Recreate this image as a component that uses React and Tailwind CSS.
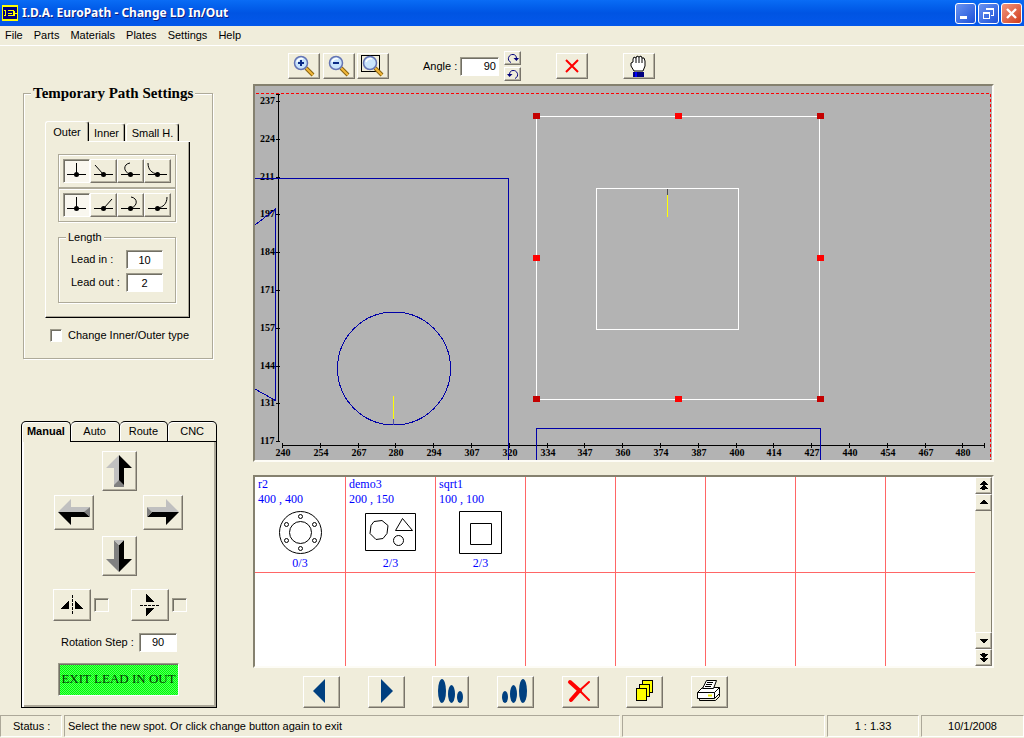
import React, { useState } from 'react';

const raised = 'border border-t-white border-l-white border-r-[#78746a] border-b-[#78746a] shadow-[inset_-1px_-1px_0_#b4b0a0] bg-[#f0eddb]';
const sunken = 'border border-t-[#9d9a8b] border-l-[#9d9a8b] border-r-white border-b-white shadow-[inset_1px_1px_0_#716f64]';
const well = 'border-2 border-t-[#85816f] border-l-[#85816f] border-r-[#fdfcf6] border-b-[#fdfcf6]';
const etched = 'border border-[#aeaa99] shadow-[inset_1px_1px_0_#fff,1px_1px_0_#fff]';

const menu = ['File', 'Parts', 'Materials', 'Plates', 'Settings', 'Help'];

const xLabels = [240, 254, 267, 280, 294, 307, 320, 334, 347, 360, 374, 387, 400, 414, 427, 440, 454, 467, 480];
const yLabels = [237, 224, 211, 197, 184, 171, 157, 144, 131, 117];

const handles = [
  [536, 116], [678, 116], [820, 116],
  [536, 258], [820, 258],
  [536, 399], [678, 399], [820, 399],
];

function TitleBar() {
  const box = 'w-[21px] h-[21px] rounded-[3px] border border-white flex items-center justify-center';
  return (
    <header className="h-[26px] flex items-center pl-[2px] pr-[2px] bg-linear-to-b from-[#0a6cf5] via-[#0054e3] to-[#0458ea]">
      <svg width="16" height="16" viewBox="0 0 16 16" shapeRendering="crispEdges">
        <rect width="16" height="16" fill="#ffff00" />
        <rect x="1" y="2" width="14" height="12" fill="#00007b" />
        <path d="M2 5h2M3 5v6M2 10.500h2M6 5.500h5v5h-5M6 8h4M12 8h3M12 6v5" stroke="#ffff00" fill="none" />
      </svg>
      <h1 className="ml-[4px] flex-1 text-[12px] font-bold text-white font-['Noto_Sans',sans-serif] [text-shadow:1px_1px_0_#0f1f80]">
        I.D.A. EuroPath - Change LD In/Out
      </h1>
      <div className="flex gap-[2px]">
        <button aria-label="Minimize" className={`${box} bg-linear-to-br from-[#6b93f0] to-[#1c4fd8]`}>
          <svg width="19" height="19"><rect x="4" y="12" width="7" height="3" fill="#fff" /></svg>
        </button>
        <button aria-label="Restore" className={`${box} bg-linear-to-br from-[#6b93f0] to-[#1c4fd8]`}>
          <svg width="19" height="19" fill="none" stroke="#fff" shapeRendering="crispEdges">
            <path d="M7 5h7v6h-2M4.500 9v5.500h6v-6h-6" />
            <path d="M7 4.500h8M4 8.500h7" strokeWidth="2" />
          </svg>
        </button>
        <button aria-label="Close" className={`${box} bg-linear-to-br from-[#f0947c] to-[#d03a14]`}>
          <svg width="19" height="19"><path d="M5 5l9 9M14 5l-9 9" stroke="#fff" strokeWidth="2.400" /></svg>
        </button>
      </div>
    </header>
  );
}

const leadShapes = {
  up: 'M13.500 4v11',
  diagLeft: 'M5 6l8 9',
  arcLeft: 'M13 4c-7 1-7 9 0 11',
  curveLeft: 'M4 4c0 7 4 10 9 11',
  diagRight: 'M22 6l-8 9',
  arcRight: 'M14 4c7 1 7 9 0 11',
  curveRight: 'M23 4c0 7-4 10-9 11',
};

function LeadButton({ shape, active, onClick }) {
  return (
    <button
      aria-label={shape}
      aria-pressed={active}
      onClick={onClick}
      className={`w-[27px] h-6 ${active ? `${sunken} bg-[#f9f7ef]` : raised}`}
    >
      <svg width="25" height="22" viewBox="1 1 25 22" fill="none" stroke="#000">
        <path d={leadShapes[shape]} />
        <path d="M4 15.500h19" shapeRendering="crispEdges" />
        <circle cx="13.500" cy="15.500" r="2.500" fill="#000" stroke="none" />
      </svg>
    </button>
  );
}

function LeadGroup({ shapes }) {
  const [selected, setSelected] = useState('up');
  return (
    <div className={`flex p-1 ${etched}`}>
      {shapes.map(s => (
        <LeadButton key={s} shape={s} active={s === selected} onClick={() => setSelected(s)} />
      ))}
    </div>
  );
}

function PathSettings() {
  const tab = 'pt-px border-t border-t-white border-r border-r-black shadow-[inset_-1px_0_0_#aca899] whitespace-nowrap';
  return (
    <fieldset className={`ml-[23px] mr-[40px] pt-[18px] pl-[21px] pr-[22px] pb-[14px] min-w-0 ${etched}`}>
      <legend className="-ml-[14px] px-[2px] h-5 leading-5 bg-[#f0eddb] font-['Liberation_Serif',serif] font-bold text-[15px] whitespace-nowrap">
        Temporary Path Settings
      </legend>
      <div role="tablist" className="flex items-end h-5">
        <button role="tab" aria-selected="true" className={`w-[44px] h-5 border-l border-l-white rounded-t-[3px] ${tab}`}>Outer</button>
        <button role="tab" className={`w-[36px] h-[18px] rounded-tr-[3px] ${tab}`}>Inner</button>
        <button role="tab" className={`ml-px w-[53px] h-[18px] border-l border-l-white rounded-t-[3px] ${tab}`}>Small H.</button>
      </div>
      <div className="flex">
        <div className="w-[44px] h-px border-l border-white"></div>
        <div className="flex-1 h-px bg-white"></div>
      </div>
      <div className="border-l border-l-white border-r border-r-black border-b border-b-black shadow-[inset_-1px_-1px_0_#aca899] pl-3 pr-[13px] pt-3 pb-[14px]">
        <LeadGroup shapes={['up', 'diagLeft', 'arcLeft', 'curveLeft']} />
        <LeadGroup shapes={['up', 'diagRight', 'arcRight', 'curveRight']} />
        <fieldset className={`mt-[7px] px-3 pt-[5px] pb-[10px] min-w-0 ${etched}`}>
          <legend className="-ml-[5px] px-[2px] h-4 leading-4 bg-[#f0eddb]">Length</legend>
          <div className="flex items-center justify-between h-[19px]">
            <label htmlFor="leadIn">Lead in :</label>
            <input id="leadIn" defaultValue="10" className={`w-[37px] h-[19px] text-center bg-white ${sunken}`} />
          </div>
          <div className="flex items-center justify-between h-[19px] mt-1">
            <label htmlFor="leadOut">Lead out :</label>
            <input id="leadOut" defaultValue="2" className={`w-[37px] h-[19px] text-center bg-white ${sunken}`} />
          </div>
        </fieldset>
      </div>
      <label className="flex items-center gap-[6px] mt-[9px] ml-[5px] whitespace-nowrap">
        <input type="checkbox" className={`appearance-none w-[12px] h-[13px] bg-white ${sunken}`} />
        Change Inner/Outer type
      </label>
    </fieldset>
  );
}

function BevelArrow({ dir }) {
  if (dir === 'up') {
    return (
      <svg width="26" height="34" viewBox="0 0 26 34">
        <path d="M13 1L0 14h8v19l5-5z" fill="#c0c0c0" />
        <path d="M13 1l13 13h-8v19l-5-5z" fill="#000" />
        <path d="M8 33v-2l5-5 5 5v2z" fill="#808080" />
      </svg>
    );
  }
  if (dir === 'down') {
    return (
      <svg width="26" height="34" viewBox="0 0 26 34">
        <path d="M13 33L0 20h8V1l5 5z" fill="#808080" />
        <path d="M13 33l13-13h-8V1l-5 5z" fill="#000" />
        <path d="M8 1h10l-5 5z" fill="#c0c0c0" />
      </svg>
    );
  }
  if (dir === 'left') {
    return (
      <svg width="34" height="26" viewBox="0 0 34 26">
        <path d="M1 13L14 0v8h19l-5 5z" fill="#c0c0c0" />
        <path d="M1 13l13 13v-8h19l-5-5z" fill="#000" />
        <path d="M33 8v10l-6-5z" fill="#808080" />
      </svg>
    );
  }
  return (
    <svg width="34" height="26" viewBox="0 0 34 26">
      <path d="M33 13L20 0v8H1l5 5z" fill="#c0c0c0" />
      <path d="M33 13L20 26v-8H1l5-5z" fill="#000" />
      <path d="M1 8v10l5-5z" fill="#808080" />
    </svg>
  );
}

function ArrowButton({ dir }) {
  const size = dir === 'up' || dir === 'down' ? 'w-[35px] h-10' : 'w-10 h-[35px]';
  return (
    <button aria-label={`Move ${dir}`} className={`flex items-center justify-center ${size} ${raised}`}>
      <BevelArrow dir={dir} />
    </button>
  );
}

function MovePanel() {
  const tab = 'flex-1 h-[21px] border-t border-r border-black rounded-t-[5px] shadow-[inset_1px_1px_0_#fff]';
  return (
    <section className="ml-[21px] mr-[36px] mt-[62px]">
      <div role="tablist" className="flex">
        <button role="tab" aria-selected="true" className={`${tab} border-l font-bold`}>Manual</button>
        <button role="tab" className={`${tab} border-b`}>Auto</button>
        <button role="tab" className={`${tab} border-b`}>Route</button>
        <button role="tab" className={`${tab} border-b`}>CNC</button>
      </div>
      <div className="flex flex-col border-l border-r border-b border-black shadow-[inset_2px_0_0_#fff,inset_-2px_-2px_0_#aca899] pt-[9px] pb-[11px]">
        <div className="flex justify-center"><ArrowButton dir="up" /></div>
        <div className="flex justify-between pl-8 pr-[33px] mt-1">
          <ArrowButton dir="left" />
          <ArrowButton dir="right" />
        </div>
        <div className="flex justify-center mt-[6px]"><ArrowButton dir="down" /></div>

        <div className="flex items-center mt-[13px] ml-[31px]">
          <button aria-label="Mirror horizontally" className={`w-[38px] h-8 flex items-center justify-center ${raised}`}>
            <svg width="24" height="20" shapeRendering="crispEdges">
              <path d="M0 14h9V6zM24 14h-9V6z" />
              <path d="M12.500 0v20" stroke="#000" strokeDasharray="3 1" />
            </svg>
          </button>
          <input type="checkbox" aria-label="Mirror horizontally" className={`appearance-none ml-[3px] w-[15px] h-[14px] ${sunken}`} />
          <button aria-label="Mirror vertically" className={`ml-[22px] w-[38px] h-8 flex items-center justify-center ${raised}`}>
            <svg width="20" height="24" shapeRendering="crispEdges">
              <path d="M6 0v9h8zM6 24v-9h8z" />
              <path d="M0 12.500h20" stroke="#000" strokeDasharray="3 1" />
            </svg>
          </button>
          <input type="checkbox" aria-label="Mirror vertically" className={`appearance-none ml-[3px] w-[15px] h-[14px] ${sunken}`} />
        </div>

        <div className="flex items-center justify-between mt-3 pl-[39px] pr-[39px]">
          <label htmlFor="rotationStep">Rotation Step :</label>
          <input id="rotationStep" defaultValue="90" className={`w-[38px] h-[19px] text-center bg-white ${sunken}`} />
        </div>

        <button className={`mt-[11px] ml-9 mr-[37px] h-[33px] whitespace-nowrap font-['Liberation_Serif',serif] text-[13px] text-[#003c00] bg-[repeating-conic-gradient(#00ff00_0%_25%,#50ff60_0%_50%)] bg-size-[2px_2px] ${sunken}`}>
          EXIT LEAD IN OUT
        </button>
      </div>
    </section>
  );
}

function Magnifier({ sign, framed }) {
  return (
    <svg width="24" height="24" viewBox="0 0 24 24" fill="none">
      {framed && <rect x="0.500" y="1.500" width="18" height="16" stroke="#000" shapeRendering="crispEdges" />}
      <path d="M14 14l7 7" stroke="#8a6410" strokeWidth="4" />
      <path d="M14 14l7 7" stroke="#f2b83a" strokeWidth="2" />
      <circle cx="9" cy="9" r="6.500" fill="#c9e4fb" stroke="#6474b4" strokeWidth="1.500" />
      <path d="M5 8c1-3 4-4 6-3" stroke="#fff" strokeWidth="1.500" />
      {sign && <path d="M6 9h6" stroke="#0a2a86" strokeWidth="2" />}
      {sign === 'plus' && <path d="M9 6v6" stroke="#0a2a86" strokeWidth="2" />}
    </svg>
  );
}

function ViewToolbar() {
  const btn = `w-8 h-[26px] flex items-center justify-center ${raised}`;
  return (
    <div className="flex items-center h-[38px] pl-[35px] pt-[2px]">
      <button aria-label="Zoom in" className={btn}><Magnifier sign="plus" /></button>
      <button aria-label="Zoom out" className={`ml-[3px] ${btn}`}><Magnifier sign="minus" /></button>
      <button aria-label="Zoom to fit" className={`ml-[2px] ${btn}`}><Magnifier framed /></button>
      <label htmlFor="angle" className="ml-[34px] w-[37px] whitespace-nowrap">Angle :</label>
      <input id="angle" defaultValue="90" className={`w-[39px] h-[19px] pr-[2px] text-right bg-white ${sunken}`} />
      <div className="flex flex-col gap-[2px] ml-[5px]">
        <button aria-label="Rotate right" className={`w-[17px] h-[14px] flex items-center justify-center ${raised}`}>
          <svg width="12" height="11" fill="none" stroke="#00007b">
            <path d="M4 9.500C-1 7 2 1 6 1.500c2 0 3.500 1.500 3.500 4" />
            <path d="M6.500 5h5.500L9.500 8z" fill="#00007b" stroke="none" />
          </svg>
        </button>
        <button aria-label="Rotate left" className={`w-[17px] h-[14px] flex items-center justify-center ${raised}`}>
          <svg width="12" height="11" fill="none" stroke="#00007b">
            <path d="M8 9.500c5-2.500 2-8.500-2-8-2 0-3.500 1.500-3.500 4" />
            <path d="M5.500 5H0l2.500 3z" fill="#00007b" stroke="none" />
          </svg>
        </button>
      </div>
      <button aria-label="Delete" className={`ml-[35px] ${btn}`}>
        <svg width="14" height="14"><path d="M1 1l12 12M13 1L1 13" stroke="#ff0000" strokeWidth="2" /></svg>
      </button>
      <button aria-label="Pan" className={`ml-[35px] ${btn}`}>
        <svg width="18" height="23" viewBox="0 0 18 23">
          <path d="M4 16l-3-5v-3l2-1V4l1-2 2 1 1-2 2 1 2-1 1 2 2 0 1 3v5l-2 5z" fill="#fff" stroke="#000" />
          <path d="M6 3v5M9 2v6M12 3v5" stroke="#000" />
          <path d="M3 17h11v5H3z" fill="#000080" />
          <path d="M5 17h2v5H5z" fill="#0000ff" />
        </svg>
      </button>
    </div>
  );
}

function Plate() {
  return (
    <div className={`bg-[#b3b3b3] ${well}`}>
      <svg className="block w-full h-auto" viewBox="255 86 737 374" fill="none" shapeRendering="crispEdges">
        <path d="M256 93.500H990.500V460" stroke="#ff0000" strokeDasharray="3 2" />

        {/* rulers */}
        <g stroke="#000">
          <path d="M278.500 94V442M276 94.500h4M282 445.500H984M984.500 443v5" />
          {yLabels.map((v, i) => {
            const y = Math.round(101 + i * 37.8) + 0.5;
            return <path key={v} d={`M276 ${y}h4`} />;
          })}
          {xLabels.map((v, i) => {
            const x = Math.round(282 + i * 37.8) + 0.5;
            return <path key={v} d={`M${x} 443v5`} />;
          })}
        </g>
        <g fill="#000" className="font-['Liberation_Serif',serif] font-bold text-[10px]">
          {yLabels.map((v, i) => (
            <text key={v} x="260" y={Math.round(104 + i * 37.8)}>{v}</text>
          ))}
          {xLabels.map((v, i) => (
            <text key={v} x={Math.round(283 + i * 37.8)} y="456" textAnchor="middle">{v}</text>
          ))}
        </g>

        {/* nested parts */}
        <g stroke="#0000a8">
          <path d="M255 178.500H508.500V460" />
          <path d="M255 225l20.500-16V400.500L255 389" />
          <circle cx="394" cy="368.500" r="56.500" />
          <path d="M536.500 460V428.500H820.500V460" />
          <path d="M393.500 419v6" stroke="#5050a8" />
        </g>
        <path d="M393.500 396v23" stroke="#ffff00" />

        {/* selected part */}
        <g stroke="#fff">
          <rect x="536.500" y="116.500" width="283" height="283" />
          <rect x="596.500" y="188.500" width="142" height="141" />
          <path d="M667.500 195v22" stroke="#ffff00" />
          <path d="M667.500 189v6" stroke="#505050" />
        </g>
        {handles.map(([x, y]) => (
          <rect key={`${x}-${y}`} x={x - 3} y={y - 3} width="7" height="6" fill={x !== 678 && y !== 258 ? '#c40000' : '#ff0000'} />
        ))}
      </svg>
    </div>
  );
}

const parts = [
  {
    name: 'r2', size: '400 , 400', count: '0/3',
    drawing: (
      <>
        <circle cx="26.500" cy="22.500" r="21" />
        <circle cx="26.500" cy="22.500" r="11" />
        <circle cx="26.500" cy="6.500" r="2" />
        <circle cx="26.500" cy="38.500" r="2" />
        <circle cx="12.500" cy="14.500" r="2" />
        <circle cx="40.500" cy="14.500" r="2" />
        <circle cx="12.500" cy="30.500" r="2" />
        <circle cx="40.500" cy="30.500" r="2" />
      </>
    ),
  },
  {
    name: 'demo3', size: '200 , 150', count: '2/3',
    drawing: (
      <>
        <path d="M0.500 3.500h50v37h-50z" />
        <path d="M9 11.500l8-1 6 5-1 8-4 5-7 1-6-6 1-8z" />
        <path d="M37.500 8.500l-7 12h17z" />
        <circle cx="33.500" cy="30.500" r="5" />
      </>
    ),
  },
  {
    name: 'sqrt1', size: '100 , 100', count: '2/3',
    drawing: (
      <>
        <path d="M4.500 1.500h42v42h-42z" />
        <path d="M15.500 13.500h21v21h-21z" />
      </>
    ),
  },
];

function PartCell({ part, first, top }) {
  return (
    <li className={`${first ? '' : 'border-l'} ${top ? 'border-b h-24' : 'h-[93px]'} border-[#ff6666] flex flex-col text-[#0000ff] font-['Liberation_Serif',serif] text-[12px] leading-[15px]`}>
      {part && (
        <>
          <span className="pl-[3px]">{part.name}</span>
          <span className="pl-[3px]">{part.size}</span>
          <svg width="52" height="46" className="self-center mt-[3px]" fill="none" stroke="#000">
            {part.drawing}
          </svg>
          <span className="text-center">{part.count}</span>
        </>
      )}
    </li>
  );
}

function ScrollButton({ label, d }) {
  return (
    <button aria-label={label} className={`w-full h-[17px] flex items-center justify-center ${raised}`}>
      <svg width="9" height="9" shapeRendering="crispEdges"><path d={d} /></svg>
    </button>
  );
}

function PartsList() {
  return (
    <div className={`flex mt-[13px] bg-white ${well}`}>
      <ul className="flex-1 grid grid-cols-8">
        {Array.from({ length: 16 }, (_, i) => (
          <PartCell key={i} part={parts[i]} first={i % 8 === 0} top={i < 8} />
        ))}
      </ul>
      <div className="w-[17px] flex flex-col bg-[#f0eddb]">
        <ScrollButton label="First page" d="M4 0h1l4 4H0zM4 4h1l4 4H0zM3 8h3v1H3z" />
        <ScrollButton label="Scroll up" d="M4 2h1l4 4H0z" />
        <div className="flex-1 border-r border-[#85816f] bg-[#f0eddb]"></div>
        <ScrollButton label="Scroll down" d="M0 3h9L5 7H4z" />
        <ScrollButton label="Last page" d="M3 0h3v1H3zM0 1h9L5 5H4zM0 5h9L5 9H4z" />
      </div>
    </div>
  );
}

const actions = [
  { label: 'Previous', icon: <path d="M17 4v24L5 16z" fill="#004080" /> },
  { label: 'Next', icon: <path d="M9 4v24l12-12z" fill="#004080" /> },
  {
    label: 'Sort descending',
    icon: <g fill="#004080"><ellipse cx="5" cy="16" rx="4" ry="12" /><ellipse cx="14.500" cy="19" rx="3.500" ry="9" /><ellipse cx="23" cy="22" rx="3" ry="6" /></g>,
  },
  {
    label: 'Sort ascending',
    icon: <g fill="#004080"><ellipse cx="4" cy="22" rx="3" ry="6" /><ellipse cx="12.500" cy="19" rx="3.500" ry="9" /><ellipse cx="22" cy="16" rx="4" ry="12" /></g>,
  },
  {
    label: 'Remove',
    icon: <g stroke="#ff0000" fill="none" strokeLinecap="round"><path d="M4 7l10 9" strokeWidth="4" /><path d="M13 15l10 10" strokeWidth="2" /><path d="M23 7L12 17" strokeWidth="2" /><path d="M13 16l-8 9" strokeWidth="4" /></g>,
  },
  {
    label: 'Duplicate',
    icon: <g fill="#ffff00" stroke="#000" shapeRendering="crispEdges"><path d="M11.500 5.500h10v12h-10z" /><path d="M8.500 9.500h10v12h-10z" /><path d="M5.500 13.500h10v12h-10z" /></g>,
  },
  {
    label: 'Print',
    icon: (
      <g fill="#fff" stroke="#000" strokeLinejoin="round">
        <path d="M2.500 17.500l5-5h17v6l-5 5h-17z" />
        <path d="M2.500 17.500h17v6M19.500 17.500l5-5" fill="none" />
        <path d="M7.500 13.500l4-8h10l-3 8z" />
        <path d="M12 7.500h6M11 9.500h6M10 11.500h6" fill="none" />
        <path d="M4.500 23.500v2h16l4-4v-3" fill="none" />
        <path d="M13 20.500h4" stroke="#e6e600" strokeWidth="2" />
      </g>
    ),
  },
];

function ActionBar() {
  return (
    <div className="flex justify-between w-[425px] ml-[50px] mt-2">
      {actions.map(a => (
        <button key={a.label} aria-label={a.label} className={`w-[37px] h-8 flex items-center justify-center ${raised}`}>
          <svg width="28" height="30" viewBox="0 2 28 30">{a.icon}</svg>
        </button>
      ))}
    </div>
  );
}

function StatusBar() {
  const panel = 'h-[22px] flex items-center border border-t-[#aca899] border-l-[#aca899] border-r-white border-b-white';
  return (
    <footer className="flex gap-[2px] h-[23px] whitespace-nowrap">
      <div className={`w-[62px] pl-3 ${panel}`}>Status :</div>
      <div className={`flex-1 pl-[3px] ${panel}`}>Select the new spot. Or click change button again to exit</div>
      <div className={`w-[203px] ${panel}`}></div>
      <div className={`w-[92px] justify-center ${panel}`}>1 : 1.33</div>
      <div className={`w-[103px] justify-center ${panel}`}>10/1/2008</div>
    </footer>
  );
}

function App() {
  return (
    <div className="min-h-screen flex flex-col bg-[#f0eddb] text-black text-[11px] font-['Liberation_Sans',Arial,sans-serif]">
      <TitleBar />
      <nav className="h-5 flex items-center gap-[11px] pl-[5px] border-b border-white">
        {menu.map(item => <button key={item}>{item}</button>)}
      </nav>
      <main className="flex-1 flex">
        <aside className="w-[253px] shrink-0 pt-[37px]">
          <PathSettings />
          <MovePanel />
        </aside>
        <div className="flex-1 min-w-0 mr-[30px]">
          <ViewToolbar />
          <Plate />
          <PartsList />
          <ActionBar />
        </div>
      </main>
      <StatusBar />
    </div>
  );
}

export default App;
